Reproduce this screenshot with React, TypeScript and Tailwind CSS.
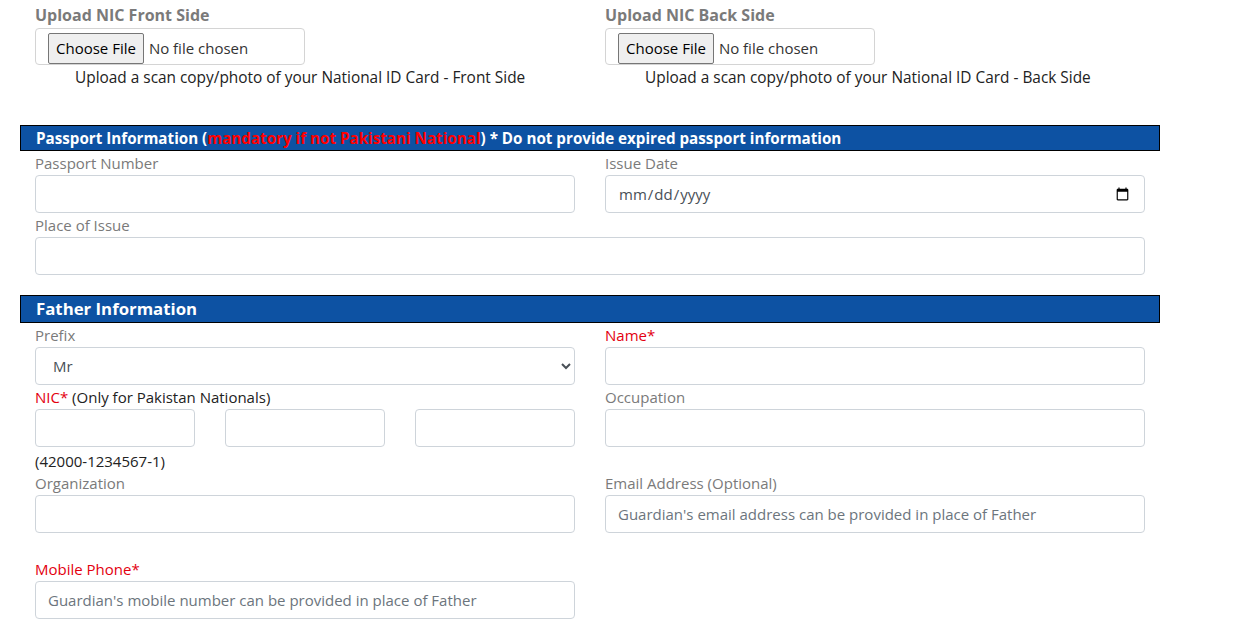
import React from "react"

const inputCls =
  "block w-full h-[38px] rounded-[4px] border border-[#ced4da] bg-white px-[12px] text-[15px] text-[#495057] placeholder:text-[#6c757d] outline-none"

function Label({ children, red }: { children: React.ReactNode; red?: boolean }) {
  return (
    <div className={`h-[24px] leading-[25px] text-[15px] ${red ? "text-[#e3000f]" : "text-[#7a7a7a]"}`}>
      {children}
    </div>
  )
}

function SectionHeader({ children, big }: { children: React.ReactNode; big?: boolean }) {
  return (
    <div
      className={`border border-black bg-[#0d52a3] pl-[15px] font-bold text-white ${
        big ? "h-[28px] text-[16.8px] leading-[26px]" : "h-[26px] text-[15.2px] leading-[24px]"
      }`}
    >
      {children}
    </div>
  )
}

function FileUpload({ title, side }: { title: string; side: string }) {
  return (
    <div>
      <div className="h-[28px] leading-[30px] text-[16px] font-bold text-[#7a7a7a]">{title}</div>
      <div className="flex h-[37px] w-[270px] items-center rounded-[4px] border border-[#d4d4d4] pl-[12px] pt-[4px]">
        <input
          type="file"
          className="text-[15px] text-[#333] file:mr-[5px] file:h-[31px] file:rounded-[2px] file:border file:border-[#767676] file:bg-[#efefef] file:px-[7px] file:text-[15px] file:text-black"
        />
      </div>
      <div className="pl-[40px] text-[15.4px] leading-[25px] text-[#222]">
        Upload a scan copy/photo of your National ID Card - {side}
      </div>
    </div>
  )
}

export default function App() {
  return (
    <div className="min-h-[636px] bg-white" style={{ fontFamily: '"Open Sans", "Noto Sans", sans-serif' }}>
      <div className="ml-[20px] w-[1140px]">
        {/* NIC uploads */}
        <div className="grid grid-cols-2 gap-[30px] px-[15px]">
          <FileUpload title="Upload NIC Front Side" side="Front Side" />
          <FileUpload title="Upload NIC Back Side" side="Back Side" />
        </div>

        {/* Passport */}
        <div className="mt-[35px]">
          <SectionHeader>
            Passport Information (<span className="text-[#ff0000]">mandatory if not Pakistani National</span>) * Do not
            provide expired passport information
          </SectionHeader>
          <div className="px-[15px]">
            <div className="grid grid-cols-2 gap-x-[30px]">
              <div>
                <Label>Passport Number</Label>
                <input className={inputCls} />
              </div>
              <div>
                <Label>Issue Date</Label>
                <input type="date" className={`${inputCls} text-[#333]`} />
              </div>
            </div>
            <Label>Place of Issue</Label>
            <input className={inputCls} />
          </div>
        </div>

        {/* Father */}
        <div className="mt-[20px]">
          <SectionHeader big>Father Information</SectionHeader>
          <div className="grid grid-cols-2 gap-x-[30px] px-[15px]">
            <div>
              <Label>Prefix</Label>
              <select className={`${inputCls} pl-[13px] text-[#333]`} defaultValue="Mr">
                <option>Mr</option>
                <option>Dr</option>
                <option>Prof</option>
              </select>
              <Label red>
                NIC* <span className="text-[#222]">(Only for Pakistan Nationals)</span>
              </Label>
              <div className="grid grid-cols-3 gap-x-[30px]">
                <input className={inputCls} />
                <input className={inputCls} />
                <input className={inputCls} />
              </div>
              <div className="h-[24px] leading-[28px] text-[15px] text-[#222]">(42000-1234567-1)</div>
              <Label>Organization</Label>
              <input className={inputCls} />
              <div className="h-[24px]" />
              <Label red>Mobile Phone*</Label>
              <input className={inputCls} placeholder="Guardian's mobile number can be provided in place of Father" />
            </div>
            <div>
              <Label red>Name*</Label>
              <input className={inputCls} />
              <Label>Occupation</Label>
              <input className={inputCls} />
              <div className="h-[24px]" />
              <Label>Email Address (Optional)</Label>
              <input className={inputCls} placeholder="Guardian's email address can be provided in place of Father" />
            </div>
          </div>
        </div>
      </div>
    </div>
  )
}
